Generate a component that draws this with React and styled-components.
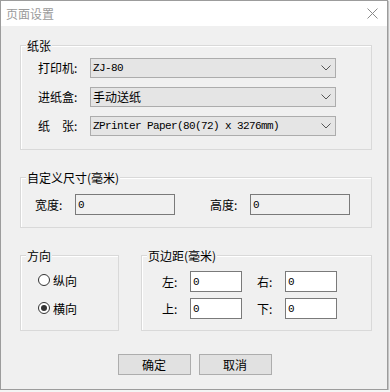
import React, { useState } from "react";
import styled, { createGlobalStyle } from "styled-components";

const GlobalStyle = createGlobalStyle`
  html, body {
    margin: 0;
    padding: 0;
    background: #f4f4f4;
  }
  body {
    font-family: "Noto Sans CJK SC", "Liberation Sans", sans-serif;
    font-size: 12px;
    color: #000;
  }
`;

// outer dialog frame
const Window = styled.div`
  width: 388px;
  height: 390px;
  box-sizing: border-box;
  border: 1px solid #9c9c9c;
  background: #f0f0f0;
  display: flex;
  flex-direction: column;
  box-shadow: 1px 1px 1px rgba(0, 0, 0, 0.2);
`;

const TitleBar = styled.div`
  height: 25px;
  flex: none;
  background: #fff;
  display: flex;
  align-items: center;
  justify-content: space-between;
  padding: 0 9px 0 5px;
  color: #9a9a9a;
  font-size: 12px;
  line-height: 16px;
`;

const Client = styled.div`
  flex: 1;
  display: flex;
  flex-direction: column;
  padding: 19px 15px 13px 19px;
`;

// etched group box with a caption sitting on the top line
const Group = styled.div`
  border: 1px solid #d9d9d9;
  box-shadow: inset 1px 1px 0 #fff;
  margin-top: ${(p) => (p.$first ? 0 : 27)}px;
  width: ${(p) => (p.$w ? `${p.$w}px` : "auto")};
  flex: ${(p) => (p.$grow ? 1 : "none")};
  box-sizing: border-box;
`;

const Caption = styled.div`
  width: fit-content;
  height: 16px;
  line-height: 16px;
  margin: -8px 0 0 5px;
  padding: 0 1px;
  background: #f0f0f0;
`;

const PaperBody = styled.div`
  display: grid;
  grid-template-columns: 52px 246px;
  row-gap: 9px;
  align-items: center;
  padding: 4px 0 13px 17px;
`;

const Label = styled.span`
  line-height: 20px;
  white-space: pre;
  width: ${(p) => (p.$w ? `${p.$w}px` : "auto")};
  flex: none;
`;

const Select = styled.div`
  height: 20px;
  box-sizing: border-box;
  border: 1px solid #acacac;
  background: #e5e5e5;
  display: flex;
  align-items: center;
  justify-content: space-between;
  padding: 0 4px 0 2px;
`;

const Value = styled.span`
  font-family: ${(p) =>
    p.$latin ? `"Liberation Mono", monospace` : `"Noto Sans CJK SC", sans-serif`};
  font-size: ${(p) => (p.$latin ? "11px" : "12px")};
  letter-spacing: ${(p) => (p.$latin ? "-0.6px" : "0")};
  line-height: 18px;
  white-space: pre;
`;

const SizeBody = styled.div`
  display: flex;
  align-items: center;
  padding: 8px 0 12px 14px;
`;

const TextBox = styled.div`
  width: ${(p) => p.$w}px;
  height: 21px;
  flex: none;
  box-sizing: border-box;
  border: 1px solid #7a7a7a;
  background: ${(p) => (p.$dim ? "#f0f0f0" : "#fff")};
  padding-left: 2px;
  display: flex;
  align-items: center;
  margin-right: ${(p) => p.$mr || 0}px;
`;

const BottomRow = styled.div`
  display: flex;
  gap: 22px;
  margin-top: 27px;
`;

const OrientBody = styled.div`
  display: flex;
  flex-direction: column;
  gap: 8px;
  padding: 6px 0 12px 17px;
`;

const RadioRow = styled.label`
  display: flex;
  align-items: center;
  height: 20px;
  gap: 3px;
  cursor: default;
`;

const RadioDot = styled.span`
  width: 12px;
  height: 12px;
  box-sizing: border-box;
  border-radius: 50%;
  border: 1px solid #333;
  background: #fff;
  display: flex;
  align-items: center;
  justify-content: center;
  &::after {
    content: "";
    width: 6px;
    height: 6px;
    border-radius: 50%;
    background: ${(p) => (p.$on ? "#333" : "transparent")};
  }
`;

const MarginBody = styled.div`
  display: flex;
  flex-direction: column;
  gap: 6px;
  padding: 7px 0 11px 20px;
`;

const MarginRow = styled.div`
  display: flex;
  align-items: center;
`;

const Buttons = styled.div`
  display: flex;
  justify-content: center;
  gap: 8px;
  margin-top: 23px;
  padding-right: 3px;
`;

const Button = styled.button`
  width: 73px;
  height: 21px;
  box-sizing: border-box;
  border: 1px solid #adadad;
  background: #e1e1e1;
  font-family: "Noto Sans CJK SC", sans-serif;
  font-size: 12px;
  line-height: 18px;
  padding: 0;
  color: #000;
`;

const Chevron = () => (
  <svg width="10" height="6" viewBox="0 0 10 6">
    <polyline points="0.5,0.5 5,5 9.5,0.5" fill="none" stroke="#555" strokeWidth="1" />
  </svg>
);

const CloseIcon = () => (
  <svg width="11" height="11" viewBox="0 0 11 11">
    <path d="M0.5 0.5 L10.5 10.5 M10.5 0.5 L0.5 10.5" stroke="#8a8a8a" strokeWidth="1" />
  </svg>
);

const paperRows = [
  { label: "打印机:", value: "ZJ-80", latin: true },
  { label: "进纸盒:", value: "手动送纸" },
  { label: "纸\u3000张:", value: "ZPrinter Paper(80(72) x 3276mm)", latin: true },
];

const App = () => {
  const [landscape, setLandscape] = useState(true);

  return (
    <>
      <GlobalStyle />
      <Window>
        <TitleBar>
          <span>页面设置</span>
          <CloseIcon />
        </TitleBar>
        <Client>
          <Group $first>
            <Caption>纸张</Caption>
            <PaperBody>
              {paperRows.map((r) => (
                <React.Fragment key={r.label}>
                  <Label>{r.label}</Label>
                  <Select>
                    <Value $latin={r.latin}>{r.value}</Value>
                    <Chevron />
                  </Select>
                </React.Fragment>
              ))}
            </PaperBody>
          </Group>

          <Group>
            <Caption>自定义尺寸(毫米)</Caption>
            <SizeBody>
              <Label $w={40}>宽度:</Label>
              <TextBox $w={100} $dim $mr={35}>
                <Value $latin>0</Value>
              </TextBox>
              <Label $w={40}>高度:</Label>
              <TextBox $w={100} $dim>
                <Value $latin>0</Value>
              </TextBox>
            </SizeBody>
          </Group>

          <BottomRow>
            <Group $first $w={99}>
              <Caption>方向</Caption>
              <OrientBody>
                <RadioRow onClick={() => setLandscape(false)}>
                  <RadioDot $on={!landscape} />
                  纵向
                </RadioRow>
                <RadioRow onClick={() => setLandscape(true)}>
                  <RadioDot $on={landscape} />
                  横向
                </RadioRow>
              </OrientBody>
            </Group>
            <Group $first $grow>
              <Caption>页边距(毫米)</Caption>
              <MarginBody>
                <MarginRow>
                  <Label $w={28}>左:</Label>
                  <TextBox $w={52} $mr={15}>
                    <Value $latin>0</Value>
                  </TextBox>
                  <Label $w={28}>右:</Label>
                  <TextBox $w={52}>
                    <Value $latin>0</Value>
                  </TextBox>
                </MarginRow>
                <MarginRow>
                  <Label $w={28}>上:</Label>
                  <TextBox $w={52} $mr={15}>
                    <Value $latin>0</Value>
                  </TextBox>
                  <Label $w={28}>下:</Label>
                  <TextBox $w={52}>
                    <Value $latin>0</Value>
                  </TextBox>
                </MarginRow>
              </MarginBody>
            </Group>
          </BottomRow>

          <Buttons>
            <Button>确定</Button>
            <Button>取消</Button>
          </Buttons>
        </Client>
      </Window>
    </>
  );
};

export default App;
